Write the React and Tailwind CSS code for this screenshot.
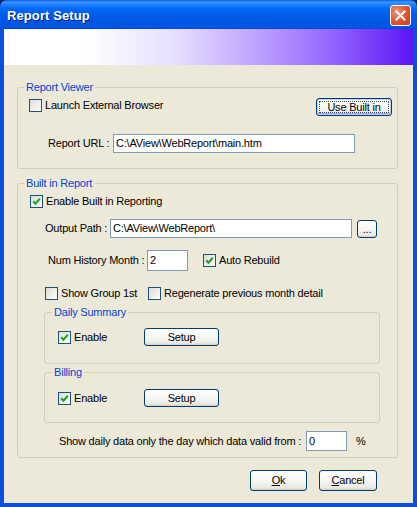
import React from "react";

const Check = ({ checked }) => (
  <span className="w-[13px] h-[13px] shrink-0 border border-[#1C5180] bg-[linear-gradient(135deg,#DCDCD7_0%,#F4F4F0_70%,#FFFFFF_100%)] flex items-center justify-center">
    {checked && (
      <svg width="9" height="9" viewBox="0 0 9 9">
        <path d="M1.2 4.2 L3.4 6.6 L7.8 1.8" stroke="#21A121" strokeWidth="2.1" fill="none" />
      </svg>
    )}
  </span>
);

const CheckLabel = ({ checked, children, className = "" }) => (
  <label className={`flex items-center gap-[3px] whitespace-nowrap ${className}`}>
    <Check checked={checked} />
    <span>{children}</span>
  </label>
);

const Button = ({ children, className = "", focused = false }) => (
  <button
    className={`relative flex items-center justify-center rounded-[3px] border border-[#003C74] bg-[linear-gradient(to_bottom,#FFFFFF_0%,#F7F7F4_50%,#ECEBE6_85%,#D6D0C5_100%)] text-black leading-none ${
      focused ? "shadow-[inset_0_0_0_1px_#B9D1F6,inset_0_-1px_0_1px_#8AA6E6]" : ""
    } ${className}`}
  >
    {focused && <span className="absolute inset-[2px] border border-dotted border-[#444]" />}
    <span className="relative">{children}</span>
  </button>
);

const TextBox = ({ value, className = "" }) => (
  <div className={`border border-[#7F9DB9] bg-white flex items-center pl-[2px] whitespace-nowrap ${className}`}>
    {value}
  </div>
);

const Group = ({ title, className = "", children }) => (
  <fieldset className={`border border-[#D0D0BF] rounded-[3px] ${className}`}>
    <legend className="px-[2px] text-[#0046D5] leading-[13px]">{title}</legend>
    {children}
  </fieldset>
);

export default function App() {
  return (
    <div className="w-[417px] h-[507px] bg-[#0A246A] font-['Liberation_Sans',Arial,sans-serif] text-[11px] leading-[13px] tracking-[-0.2px] text-black">
      <div className="w-[417px] h-[507px] flex flex-col">
        {/* Title bar */}
        <div className="h-[29px] shrink-0 rounded-t-[7px] flex items-center justify-between pl-[7px] pr-[6px] bg-[linear-gradient(to_bottom,#0A5FEA_0%,#3D95FF_7%,#2A8AFF_12%,#137BFF_20%,#0469F7_30%,#0060EE_45%,#0058E6_65%,#0055E3_82%,#0056E8_92%,#0047D3_100%)]">
          <span className="text-white font-bold text-[13px] tracking-[0.1px] [text-shadow:1px_1px_0_#0A1E87] mt-[1px]">
            Report Setup
          </span>
          <div className="w-[21px] h-[21px] mt-[1px] rounded-[3px] border border-white bg-[radial-gradient(circle_at_30%_30%,#EE9A7D_0%,#DF5B36_45%,#C8391B_100%)] flex items-center justify-center">
            <svg width="11" height="11" viewBox="0 0 11 11">
              <path d="M1.5 1.5 L9.5 9.5 M9.5 1.5 L1.5 9.5" stroke="white" strokeWidth="2" strokeLinecap="square" />
            </svg>
          </div>
        </div>

        {/* Window frame */}
        <div className="flex-1 flex flex-col border-x-4 border-b-4 border-[#0B4FE0] shadow-[inset_1px_0_0_#0A3FC4]">
          {/* Header banner */}
          <div className="h-[36px] shrink-0 bg-[linear-gradient(to_right,#FFFFFF_0%,#FFFFFF_20%,#E6DEFF_42%,#C2A8FF_60%,#9466FF_80%,#5A16F5_100%)]" />

          {/* Dialog body */}
          <div className="flex-1 bg-[#ECE9D8] pt-[16px]">
            <Group title="Report Viewer" className="ml-[13px] w-[381px] px-[6px] pb-[15px]">
              <div className="flex items-start pt-[4px]">
                <CheckLabel className="ml-[5px] mt-[1px]">Launch External Browser</CheckLabel>
                <div className="flex-1" />
                <Button focused className="w-[76px] h-[18px] mr-[-1px]">Use Built in</Button>
              </div>
              <div className="flex items-center mt-[18px] ml-[24px]">
                <span className="w-[65px] whitespace-nowrap">Report URL :</span>
                <TextBox value="C:\AView\WebReport\main.htm" className="w-[242px] h-[19px]" />
              </div>
            </Group>

            <Group title="Built in Report" className="ml-[13px] mt-[8px] w-[381px] px-[6px] pb-[6px]">
              <div className="pt-[5px]">
                <CheckLabel checked className="ml-[6px]">Enable Built in Reporting</CheckLabel>
              </div>

              <div className="flex items-start mt-[11px] ml-[21px]">
                <span className="w-[65px] h-[19px] flex items-center whitespace-nowrap">Output Path :</span>
                <TextBox value="C:\AView\WebReport\" className="w-[242px] h-[19px]" />
                <Button className="w-[20px] h-[18px] ml-[5px] mt-[1px]">...</Button>
              </div>

              <div className="flex items-center mt-[12px] ml-[24px]">
                <span className="w-[99px] whitespace-nowrap">Num History Month :</span>
                <TextBox value="2" className="w-[41px] h-[21px]" />
                <CheckLabel checked className="ml-[15px]">Auto Rebuild</CheckLabel>
              </div>

              <div className="flex items-center mt-[16px] ml-[21px]">
                <CheckLabel className="w-[103px]">Show Group 1st</CheckLabel>
                <CheckLabel>Regenerate previous month detail</CheckLabel>
              </div>

              <Group title="Daily Summary" className="ml-[20px] mt-[6px] w-[336px] px-[7px] pb-[17px]">
                <div className="flex items-center pt-[9px]">
                  <CheckLabel checked className="ml-[6px] w-[86px]">Enable</CheckLabel>
                  <Button className="w-[75px] h-[18px]">Setup</Button>
                </div>
              </Group>

              <Group title="Billing" className="ml-[20px] mt-[2px] w-[336px] px-[7px] pb-[15px]">
                <div className="flex items-center pt-[10px]">
                  <CheckLabel checked className="ml-[6px] w-[86px]">Enable</CheckLabel>
                  <Button className="w-[75px] h-[18px]">Setup</Button>
                </div>
              </Group>

              <div className="flex items-center mt-[8px] ml-[35px]">
                <span className="w-[247px] whitespace-nowrap">Show daily data only the day which data valid from :</span>
                <TextBox value="0" className="w-[41px] h-[20px]" />
                <span className="ml-[9px]">%</span>
              </div>
            </Group>

            <div className="flex justify-end gap-[12px] mt-[12px] pr-[36px]">
              <Button className="w-[57px] h-[21px]">
                <span className="underline">O</span>k
              </Button>
              <Button className="w-[58px] h-[21px]">
                <span className="underline">C</span>ancel
              </Button>
            </div>
          </div>
        </div>
      </div>
    </div>
  );
}
